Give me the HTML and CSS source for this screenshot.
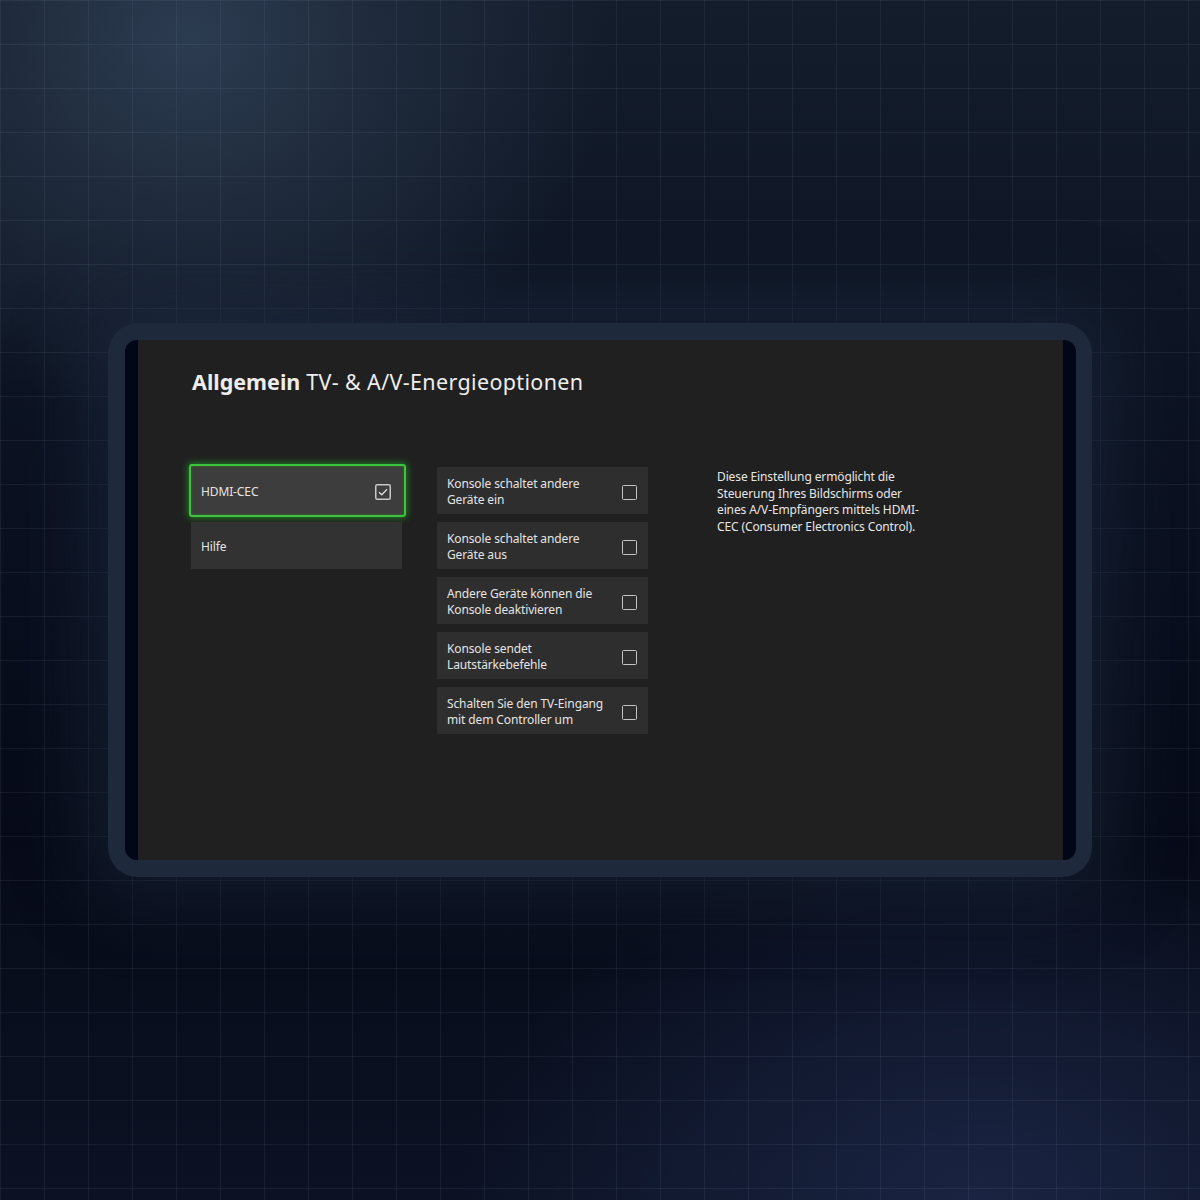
FILE: index.html
```html
<!DOCTYPE html>
<html lang="de">
<head>
<meta charset="utf-8">
<title>TV- & A/V-Energieoptionen</title>
<link rel="stylesheet" href="styles.css">
</head>
<body>
<div class="stage">
  <div class="frame">
    <div class="screen">
      <div class="content">
        <h1 class="title"><b>Allgemein</b> TV- &amp; A/V-Energieoptionen</h1>
        <div class="columns">
          <div class="menu">
            <div class="menu-item selected">
              <span>HDMI-CEC</span>
              <svg class="box" width="16" height="16" viewBox="0 0 16 16"><rect x="0.75" y="0.75" width="14.5" height="14.5" rx="1.5" fill="none" stroke="#c8c8c8" stroke-width="1.5"/><path d="M4 8.2 L6.8 10.8 L12 5.2" fill="none" stroke="#d8d8d8" stroke-width="1.4"/></svg>
            </div>
            <div class="menu-item"><span>Hilfe</span></div>
          </div>
          <div class="options">
            <div class="option"><span>Konsole schaltet andere<br>Geräte ein</span><i class="check"></i></div>
            <div class="option"><span>Konsole schaltet andere<br>Geräte aus</span><i class="check"></i></div>
            <div class="option"><span>Andere Geräte können die<br>Konsole deaktivieren</span><i class="check"></i></div>
            <div class="option"><span>Konsole sendet<br>Lautstärkebefehle</span><i class="check"></i></div>
            <div class="option"><span>Schalten Sie den TV-Eingang<br>mit dem Controller um</span><i class="check"></i></div>
          </div>
          <p class="desc">Diese Einstellung ermöglicht die<br>Steuerung Ihres Bildschirms oder<br>eines A/V-Empfängers mittels HDMI-<br>CEC (Consumer Electronics Control).</p>
        </div>
      </div>
    </div>
  </div>
</div>
</body>
</html>
```

FILE: styles.css
```css
html, body {
  margin: 0;
  padding: 0;
}
body {
  width: 1200px;
  height: 1200px;
  overflow: hidden;
  background-color: #070c18;
  background-image:
    linear-gradient(rgba(150,170,200,0.09) 1px, transparent 1px),
    linear-gradient(90deg, rgba(150,170,200,0.09) 1px, transparent 1px),
    radial-gradient(ellipse 420px 380px at 190px 40px, #2c3c50 0%, #1c2738 55%, rgba(12,18,32,0) 100%),
    radial-gradient(ellipse 520px 360px at 980px 1200px, #1a2442 0%, rgba(14,20,40,0) 100%),
    linear-gradient(180deg, #141d2c 0%, #0a1020 45%, #070b18 70%, #0c1224 100%);
  background-size: 44px 44px, 44px 44px, auto, auto, auto;
  font-family: "Noto Sans", "Open Sans", sans-serif;
}
.stage {
  height: 1200px;
  display: flex;
  align-items: center;
  justify-content: center;
}
.frame {
  width: 951px;
  height: 520px;
  padding: 17px 16px 17px 17px;
  background: #1e293b;
  border-radius: 30px;
  box-shadow: 0 0 70px 20px rgba(30,42,62,0.55);
}
.screen {
  height: 100%;
  background: #020616;
  border-radius: 12px;
  padding: 0 13px;
  box-sizing: border-box;
}
.content {
  height: 100%;
  background: #202020;
  padding: 24px 0 0 54px;
  box-sizing: border-box;
  color: #eaeaea;
}
.title {
  margin: 0;
  font-size: 21.5px;
  font-weight: 400;
  line-height: 36px;
  letter-spacing: 0.35px;
  color: #ededed;
}
.title b {
  font-weight: 700;
  letter-spacing: 0;
}
.columns {
  margin-top: 67px;
  margin-left: -1px;
  display: grid;
  grid-template-columns: 211px 211px 230px;
  column-gap: 35px;
  align-items: start;
}
.columns .desc {
  margin-left: 34px;
}
.menu, .options {
  display: flex;
  flex-direction: column;
  gap: 8px;
}
.menu-item, .option {
  height: 47px;
  box-sizing: border-box;
  display: flex;
  align-items: center;
  justify-content: space-between;
  font-size: 12px;
  line-height: 16.5px;
  letter-spacing: -0.12px;
  color: #e4e4e4;
  padding-top: 3px;
}
.menu-item {
  background: #323232;
  padding-left: 10px;
  padding-right: 12px;
}
.menu-item.selected {
  height: 53px;
  margin: -3px -4px -3px -2px;
  padding-left: 10px;
  padding-right: 13px;
  background: #3d3d3d;
  border: 2px solid #3dc43d;
  border-radius: 3px;
  box-shadow: 0 0 7px 1px rgba(40,200,40,0.55), inset 0 0 3px rgba(40,200,40,0.35);
}
.option {
  background: #2e2e2e;
  padding-left: 10px;
  padding-right: 11px;
}
.check {
  width: 15px;
  height: 15px;
  box-sizing: border-box;
  border: 1.5px solid #c4c4c4;
  border-radius: 1.5px;
  flex: none;
}
.box {
  flex: none;
}
.desc {
  margin: 0;
  padding-top: 2px;
  font-size: 12px;
  line-height: 16.7px;
  letter-spacing: -0.12px;
  white-space: nowrap;
  color: #e6e6e6;
}
```
